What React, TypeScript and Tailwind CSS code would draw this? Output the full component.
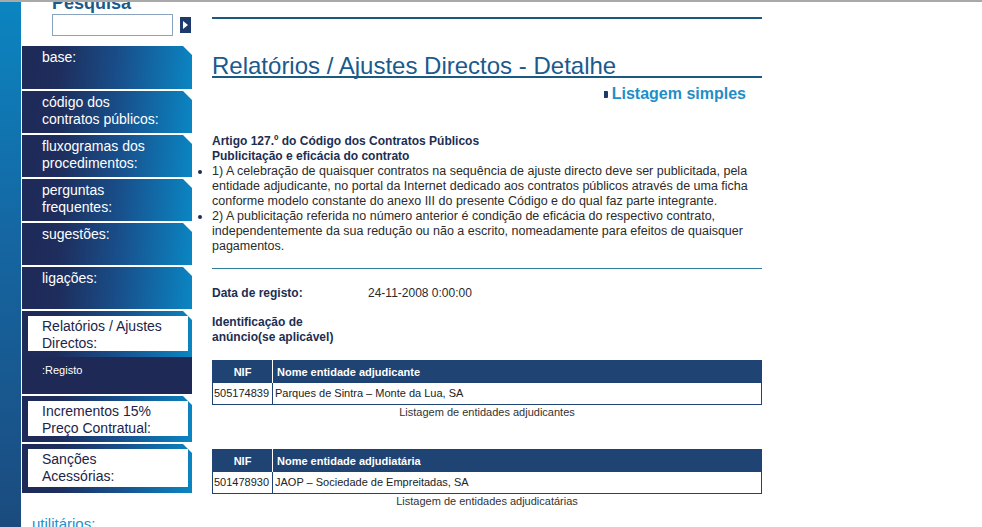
import React from 'react';

type MenuItem = {
  lines: string[];
  kind: 'normal' | 'active' | 'sub';
  h: string;
};

const menu: MenuItem[] = [
  { lines: ['base:'], kind: 'normal', h: 'h-[43px]' },
  { lines: ['código dos', 'contratos públicos:'], kind: 'normal', h: 'h-[42px]' },
  { lines: ['fluxogramas dos', 'procedimentos:'], kind: 'normal', h: 'h-[42px]' },
  { lines: ['perguntas', 'frequentes:'], kind: 'normal', h: 'h-[42px]' },
  { lines: ['sugestões:'], kind: 'normal', h: 'h-[42px]' },
  { lines: ['ligações:'], kind: 'normal', h: 'h-[42px]' },
  { lines: ['Relatórios / Ajustes', 'Directos:'], kind: 'active', h: 'h-[46px]' },
  { lines: [':Registo'], kind: 'sub', h: 'h-[37px]' },
  { lines: ['Incrementos 15%', 'Preço Contratual:'], kind: 'active', h: 'h-[46px]' },
  { lines: ['Sanções', 'Acessórias:'], kind: 'active', h: 'h-[49px]' },
];

const gradient =
  'bg-[linear-gradient(95deg,#1e2a58_0%,#1e2d5c_22%,#18508c_58%,#0a86c3_100%)] [clip-path:polygon(0_0,calc(100%_-_9px)_0,100%_9px,100%_100%,0_100%)]';

function SideMenu() {
  return (
    <nav className="flex flex-col gap-[2px]">
      {menu.map((item, i) => {
        if (item.kind === 'sub') {
          return (
            <div key={i} className={`${item.h} shrink-0 -mt-[2px] bg-[#1e2a55] pl-[20px] pt-[6px] text-[11px] leading-[14px] text-white`}>
              {item.lines[0]}
            </div>
          );
        }
        if (item.kind === 'active') {
          return (
            <div key={i} className={`${item.h} shrink-0 ${gradient} pt-[5px] pb-[6px] pl-[6px] pr-[4px]`}>
              <div className="h-full bg-white pl-[14px] pt-[2px] text-[14px] leading-[17px] text-[#1c2448]">
                {item.lines.map((l) => (
                  <div key={l}>{l}</div>
                ))}
              </div>
            </div>
          );
        }
        return (
          <div key={i} className={`${item.h} shrink-0 ${gradient} pl-[20px] pt-[3px] text-[14px] leading-[17px] text-white`}>
            {item.lines.map((l) => (
              <div key={l}>{l}</div>
            ))}
          </div>
        );
      })}
    </nav>
  );
}

function EntityTable({ head, nif, name, caption }: { head: string; nif: string; name: string; caption: string }) {
  return (
    <div>
      <table className="w-full border-collapse border border-[#1f4372] text-[11px]">
        <thead>
          <tr className="h-[22px] bg-[#1f4372] text-white">
            <th className="w-[60px] border-r border-white text-center font-bold">NIF</th>
            <th className="pl-[4px] text-left font-bold">{head}</th>
          </tr>
        </thead>
        <tbody>
          <tr className="h-[22px] text-[#222]">
            <td className="border-r border-[#1f4372] pl-[1px]">{nif}</td>
            <td className="pl-[2px]">{name}</td>
          </tr>
        </tbody>
      </table>
      <div className="text-center text-[11px] leading-[14px] text-[#333]">{caption}</div>
    </div>
  );
}

export default function App() {
  return (
    <div className="h-[527px] w-[982px] overflow-hidden border-t-2 border-[#a9a9a9] bg-white font-['Liberation_Sans',Arial,sans-serif]">
      <div className="flex h-full">
        {/* left blue strip */}
        <div className="w-[21px] shrink-0 bg-[linear-gradient(180deg,#0b85c0_0%,#1566a2_45%,#1b4b7e_100%)]" />

        {/* sidebar */}
        <aside className="ml-[1px] flex w-[170px] shrink-0 flex-col">
          <div className="flex h-[44px] shrink-0 flex-col pl-[30px]">
            <div className="-mt-[8px] text-[18px] font-bold leading-[18px] text-[#1a5a8c]">Pesquisa</div>
            <div className="mt-[2px] flex items-start">
              <input className="h-[22px] w-[121px] border border-[#8aa4bf] bg-white outline-none" />
              <button className="ml-[7px] mt-[3px] flex h-[16px] w-[11px] items-center justify-center bg-[#1d3a6a]">
                <span className="h-0 w-0 border-y-[4px] border-l-[5px] border-y-transparent border-l-white" />
              </button>
            </div>
          </div>
          <SideMenu />
          <div className="mt-[22px] shrink-0 pl-[10px] text-[15px] leading-[18px] text-[#1e8fca]">utilitários:</div>
        </aside>

        {/* main content */}
        <main className="ml-[20px] w-[550px] shrink-0">
          <div className="mt-[15px] h-[2px] bg-[#1a5a80]" />
          <h1 className="mt-[37px] border-b-2 border-[#1a5a80] text-[24px] leading-[20px] text-[#1a5a8c]">
            Relatórios / Ajustes Directos - Detalhe
          </h1>
          <div className="mt-[7px] flex items-center justify-end pr-[16px]">
            <span className="mr-[4px] inline-block h-[7px] w-[4px] rounded-r-[1px] bg-[#1a3a6a]" />
            <span className="text-[16px] font-bold leading-[18px] text-[#1e8ec8]">Listagem simples</span>
          </div>

          <div className="mt-[31px] text-[12px] leading-[15px]">
            <div className="font-bold text-[#1c2e52]">Artigo 127.º do Código dos Contratos Públicos</div>
            <div className="font-bold text-[#1c2e52]">Publicitação e eficácia do contrato</div>
            <ul className="list-disc text-[12.5px] text-[#2b2b2b] marker:text-[#1c2e52]">
              <li>
                1) A celebração de quaisquer contratos na sequência de ajuste directo deve ser publicitada, pela entidade adjudicante, no portal da Internet dedicado aos contratos públicos através de uma ficha conforme modelo constante do anexo III do presente Código e do qual faz parte integrante.
              </li>
              <li>
                2) A publicitação referida no número anterior é condição de eficácia do respectivo contrato, independentemente da sua redução ou não a escrito, nomeadamente para efeitos de quaisquer pagamentos.
              </li>
            </ul>
          </div>

          <div className="mt-[14px] h-px bg-[#2f7e9e]" />

          <div className="mt-[17px] flex text-[12px] leading-[15px]">
            <div className="w-[156px] font-bold text-[#1c2e52]">Data de registo:</div>
            <div className="text-[#2b2b2b]">24-11-2008 0:00:00</div>
          </div>

          <div className="mt-[14px] text-[12px] font-bold leading-[15px] text-[#1c2e52]">
            <div>Identificação de</div>
            <div>anúncio(se aplicável)</div>
          </div>

          <div className="mt-[15px]">
            <EntityTable
              head="Nome entidade adjudicante"
              nif="505174839"
              name="Parques de Sintra – Monte da Lua, SA"
              caption="Listagem de entidades adjudicantes"
            />
          </div>
          <div className="mt-[30px]">
            <EntityTable
              head="Nome entidade adjudiatária"
              nif="501478930"
              name="JAOP – Sociedade de Empreitadas, SA"
              caption="Listagem de entidades adjudicatárias"
            />
          </div>
        </main>
      </div>
    </div>
  );
}
